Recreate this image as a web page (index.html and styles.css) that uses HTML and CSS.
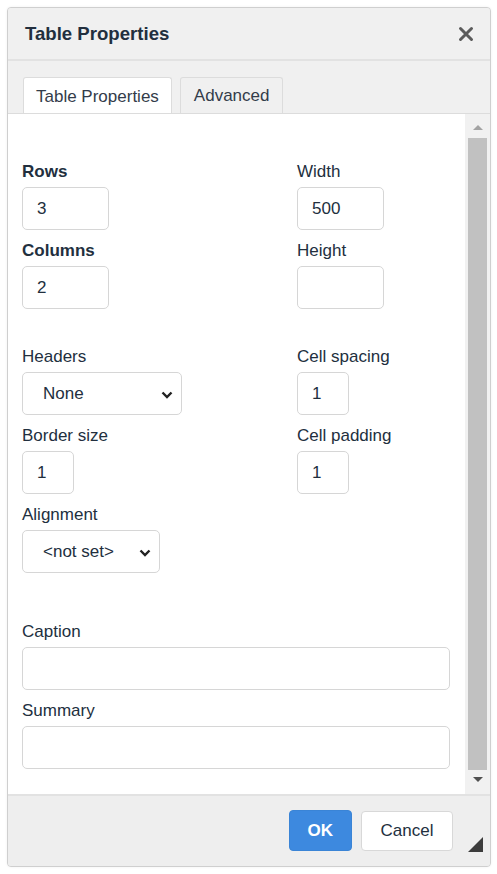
FILE: index.html
```html
<!DOCTYPE html>
<html lang="en">
<head>
<meta charset="utf-8">
<title>Table Properties</title>
<link rel="stylesheet" href="styles.css">
</head>
<body>
<div class="dialog">
  <div class="dialog-header">
    <div class="dialog-title">Table Properties</div>
    <button class="close" aria-label="Close">
      <svg width="16" height="16" viewBox="0 0 16 16"><path d="M2.5 2.5 L13.5 13.5 M13.5 2.5 L2.5 13.5" stroke="#5b5b5b" stroke-width="3" stroke-linecap="round"/></svg>
    </button>
  </div>
  <div class="tabbar">
    <div class="tab active">Table Properties</div>
    <div class="tab adv">Advanced</div>
  </div>
  <div class="body">
    <div class="scroll">
      <div class="grid">
        <div class="field"><label class="strong">Rows</label><div class="input w-md">3</div></div>
        <div class="field"><label>Width</label><div class="input w-md">500</div></div>
        <div class="field"><label class="strong">Columns</label><div class="input w-md">2</div></div>
        <div class="field"><label>Height</label><div class="input w-md"></div></div>

        <div class="field sect"><label>Headers</label>
          <div class="select w-hd"><span>None</span>
            <svg width="12" height="8" viewBox="0 0 12 8"><path d="M1.5 1.5 L6 6 L10.5 1.5" fill="none" stroke="#222" stroke-width="2.4"/></svg>
          </div>
        </div>
        <div class="field sect"><label>Cell spacing</label><div class="input w-sm">1</div></div>
        <div class="field"><label>Border size</label><div class="input w-sm">1</div></div>
        <div class="field"><label>Cell padding</label><div class="input w-sm">1</div></div>
        <div class="field"><label>Alignment</label>
          <div class="select w-al"><span>&lt;not set&gt;</span>
            <svg width="12" height="8" viewBox="0 0 12 8"><path d="M1.5 1.5 L6 6 L10.5 1.5" fill="none" stroke="#222" stroke-width="2.4"/></svg>
          </div>
        </div>
        <div class="field"></div>

        <div class="field full cap"><label>Caption</label><div class="input w-full"></div></div>
        <div class="field full"><label>Summary</label><div class="input w-full"></div></div>
      </div>
    </div>
    <div class="scrollbar">
      <div class="arrow up"></div>
      <div class="thumb"></div>
      <div class="arrow down"></div>
    </div>
  </div>
  <div class="footer">
    <button class="btn primary">OK</button>
    <button class="btn">Cancel</button>
  </div>
  <div class="grip"></div>
</div>
</body>
</html>
```
FILE: styles.css
```css
* { box-sizing: border-box; }
html, body { margin: 0; padding: 0; }
body {
  background: #ffffff;
  font-family: "Liberation Sans", Arial, sans-serif;
  font-size: 17px;
  color: #222f3e;
  width: 497px;
  height: 874px;
  overflow: hidden;
}
.dialog {
  position: relative;
  margin: 7px 0 0 7px;
  width: 484px;
  height: 860px;
  border: 1px solid #cfcfcf;
  border-radius: 4px;
  background: #f0f0f0;
  display: flex;
  flex-direction: column;
  overflow: hidden;
  box-shadow: 0 0 3px rgba(0,0,0,0.06);
}
.dialog-header {
  height: 53px;
  flex: none;
  display: flex;
  align-items: center;
  justify-content: space-between;
  padding: 0 16px 0 17px;
  border-bottom: 2px solid #e2e2e2;
  background: #f0f0f0;
}
.dialog-title {
  font-weight: bold;
  font-size: 18.6px;
  padding-top: 1px;
}
.close {
  border: 0;
  background: none;
  padding: 0;
  width: 16px;
  height: 16px;
  display: flex;
}
.tabbar {
  flex: none;
  height: 52px;
  display: flex;
  align-items: flex-end;
  gap: 8px;
  padding-left: 15px;
  background: #f0f0f0;
}
.tab {
  height: 36px;
  padding: 1px 12px 0 12px;
  display: flex;
  align-items: center;
  border: 1px solid #dcdcdc;
  border-bottom: 0;
  border-radius: 3px 3px 0 0;
  color: #333c4a;
  background: #f0f0f0;
}
.tab.adv { padding: 1px 13px 0 13px; }
.tab.active {
  background: #ffffff;
  margin-bottom: -1px;
  height: 37px;
}
.body {
  flex: 1;
  display: flex;
  background: #ffffff;
  border-top: 1px solid #dcdcdc;
  border-bottom: 2px solid #e2e2e2;
  min-height: 0;
}
.scroll {
  flex: 1;
  padding: 48px 15px 0 14px;
}
.grid {
  display: grid;
  grid-template-columns: 275px 1fr;
}
.field {
  display: flex;
  flex-direction: column;
  align-items: flex-start;
  margin-bottom: 11px;
}
.field.full { grid-column: 1 / -1; }
.field.sect { margin-top: 27px; }
.field.cap { margin-top: 38px; }
label {
  line-height: 20px;
  height: 20px;
  margin-bottom: 5px;
  white-space: nowrap;
}
label.strong { font-weight: bold; }
.input, .select {
  height: 43px;
  border: 1px solid #d6d6d6;
  border-radius: 5px;
  background: #fff;
  display: flex;
  align-items: center;
  padding-left: 14px;
  padding-top: 1px;
}
.w-md { width: 87px; }
.w-sm { width: 52px; }
.w-full { width: 428px; }
.w-hd { width: 160px; }
.w-al { width: 138px; }
.select {
  padding-left: 20px;
  padding-right: 8px;
  justify-content: space-between;
}
.select svg { flex: none; margin-top: 1px; }
.scrollbar {
  flex: none;
  width: 25px;
  background: #f1f1f1;
  display: flex;
  flex-direction: column;
  align-items: center;
  padding: 7px 0 8px;
}
.arrow {
  width: 0; height: 0;
  border-left: 5px solid transparent;
  border-right: 5px solid transparent;
  flex: none;
}
.arrow.up { border-bottom: 5px solid #a3a3a3; margin: 4px 0 8px; }
.arrow.down { border-top: 5px solid #505050; margin: 7px 0 4px; }
.thumb {
  flex: 1;
  width: 19px;
  background: #c1c1c1;
}
.footer {
  flex: none;
  height: 70px;
  display: flex;
  justify-content: flex-end;
  align-items: flex-start;
  gap: 9px;
  padding: 14px 37px 0 0;
  background: #eeeeee;
}
.btn {
  height: 40px;
  padding: 0 18.5px;
  border: 1px solid #d8d8d8;
  border-radius: 4px;
  background: #fff;
  font-family: "Liberation Sans", Arial, sans-serif;
  font-size: 17px;
  color: #222f3e;
  margin-top: 1px;
}
.btn.primary {
  background: #3d89df;
  border-color: #3a84d6;
  color: #ffffff;
  font-weight: bold;
  padding: 0 18px;
  margin-top: 0;
  height: 41px;
}
.grip {
  position: absolute;
  right: 7px;
  bottom: 14px;
  width: 0;
  height: 0;
  border-left: 15px solid transparent;
  border-bottom: 15px solid #3c3c3c;
}
```
